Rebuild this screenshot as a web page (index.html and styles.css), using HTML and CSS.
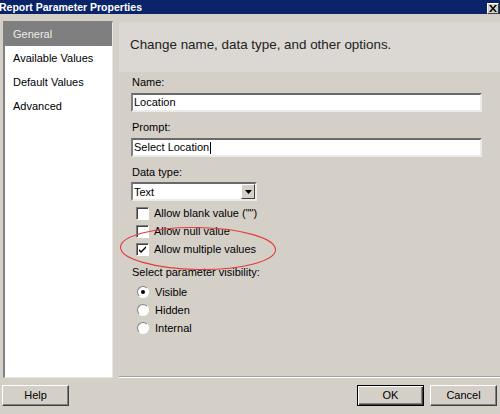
FILE: index.html
```html
<!DOCTYPE html>
<html>
<head>
<meta charset="utf-8">
<link rel="stylesheet" href="styles.css">
</head>
<body>
<div class="window">
  <div class="titlebar">
    <span class="title">Report Parameter Properties</span>
    <span class="close"><svg width="8" height="7" viewBox="0 0 8 7"><path d="M0 0h2l2 2.5L6 0h2L5 3.5 8 7H6L4 4.5 2 7H0l3-3.5z" fill="#000"/></svg></span>
  </div>
  <div class="main">
    <div class="nav">
      <div class="nav-item selected">General</div>
      <div class="nav-item">Available Values</div>
      <div class="nav-item">Default Values</div>
      <div class="nav-item">Advanced</div>
    </div>
    <div class="content">
      <div class="header">Change name, data type, and other options.</div>
      <div class="form">
        <div class="label">Name:</div>
        <div class="textbox">Location</div>
        <div class="label gap">Prompt:</div>
        <div class="textbox">Select Location<span class="caret"></span></div>
        <div class="label gap">Data type:</div>
        <div class="select"><span class="select-text">Text</span><span class="drop"><svg width="7" height="4" viewBox="0 0 7 4"><path d="M0 0h7L3.5 4z" fill="#000"/></svg></span></div>
        <div class="checks">
          <div class="row"><span class="cb"></span>Allow blank value ("")</div>
          <div class="row"><span class="cb"></span>Allow null value</div>
          <div class="row"><span class="cb"><svg width="9" height="9" viewBox="0 0 9 9"><path d="M1 4l2 2 5-5v2L3 8 1 6z" fill="#000"/></svg></span>Allow multiple values</div>
        </div>
        <div class="label vis">Select parameter visibility:</div>
        <div class="radios">
          <div class="row"><span class="rb on"></span>Visible</div>
          <div class="row"><span class="rb"></span>Hidden</div>
          <div class="row"><span class="rb"></span>Internal</div>
        </div>
      </div>
      <div class="sep"></div>
    </div>
  </div>
  <div class="footer">
    <div class="btn">Help</div>
    <div class="spacer"></div>
    <div class="btn default">OK</div>
    <div class="btn">Cancel</div>
  </div>
  <svg class="annot" width="170" height="50" viewBox="0 0 170 50"><ellipse cx="85" cy="24.5" rx="77.5" ry="21" fill="none" stroke="#e23b3b" stroke-width="1.1" transform="rotate(1 85 24.5)"/></svg>
</div>
</body>
</html>
```
FILE: styles.css
```css
html, body {
  margin: 0;
  padding: 0;
}
body {
  width: 500px;
  height: 414px;
  overflow: hidden;
  background: #d4d0c8;
  font-family: "Liberation Sans", Arial, sans-serif;
  font-size: 11px;
  color: #000;
}
.window {
  position: relative;
  width: 500px;
  height: 414px;
  display: flex;
  flex-direction: column;
}
.titlebar {
  height: 14px;
  background: #0a246a;
  display: flex;
  align-items: center;
  justify-content: space-between;
}
.title {
  color: #fff;
  font-weight: bold;
  font-size: 10.5px;
  margin-left: -1px;
  line-height: 14px;
}
.close {
  width: 12px;
  height: 11px;
  margin-top: 3px;
  margin-right: 1px;
  background: #d4d0c8;
  box-sizing: border-box;
  border-top: 1px solid #fff;
  border-left: 1px solid #fff;
  border-right: 1px solid #404040;
  border-bottom: 1px solid #404040;
  display: flex;
  align-items: center;
  justify-content: center;
}
.main {
  display: flex;
  height: 364px;
}
.nav {
  margin-top: 7px;
  margin-left: 3px;
  width: 110px;
  height: 357px;
  box-sizing: border-box;
  background: #fff;
  border-top: 2px solid #808080;
  border-left: 2px solid #808080;
  border-right: 1px solid #e8e6e2;
  border-bottom: 1px solid #e8e6e2;
}
.nav-item {
  height: 24px;
  line-height: 24px;
  padding-left: 8px;
}
.nav-item.selected {
  background: #7f7f7f;
  color: #ececec;
  height: 23px;
  line-height: 23px;
}
.content {
  margin-left: 6px;
  flex: 1;
  display: flex;
  flex-direction: column;
}
.header {
  margin-top: 8px;
  height: 50px;
  line-height: 46px;
  padding-left: 11px;
  font-size: 13.4px;
  color: #222;
  background: #dbd8d3;
}
.form {
  padding-left: 12px;
}
.label {
  margin-top: 4px;
  height: 13px;
  line-height: 13px;
  padding-left: 1px;
}
.label.gap {
  margin-top: 9px;
}
.label.vis {
  margin-top: 8px;
}
.textbox {
  margin-top: 4px;
  width: 351px;
  height: 19px;
  box-sizing: border-box;
  background: #fff;
  border-top: 2px solid #6a6a6a;
  border-left: 2px solid #808080;
  border-right: 2px solid #ecebe8;
  border-bottom: 2px solid #ecebe8;
  line-height: 15px;
  padding-left: 1px;
  display: flex;
  align-items: center;
}
.caret {
  display: inline-block;
  width: 1px;
  height: 12px;
  background: #000;
  margin-left: 1px;
}
.select {
  margin-top: 3px;
  width: 126px;
  height: 19px;
  box-sizing: border-box;
  background: #fff;
  border-top: 2px solid #6a6a6a;
  border-left: 2px solid #808080;
  border-right: 2px solid #ecebe8;
  border-bottom: 2px solid #ecebe8;
  display: flex;
  align-items: center;
  justify-content: space-between;
}
.select-text {
  padding-left: 1px;
}
.drop {
  width: 14px;
  height: 15px;
  box-sizing: border-box;
  background: #d4d0c8;
  border-top: 1px solid #fff;
  border-left: 1px solid #fff;
  border-right: 1px solid #404040;
  border-bottom: 1px solid #404040;
  display: flex;
  align-items: center;
  justify-content: center;
}
.checks {
  margin-top: 3px;
}
.row {
  height: 18px;
  display: flex;
  align-items: center;
  padding-left: 5px;
}
.cb {
  width: 13px;
  height: 13px;
  box-sizing: border-box;
  background: #fff;
  border-top: 1px solid #808080;
  border-left: 1px solid #808080;
  border-right: 1px solid #fff;
  border-bottom: 1px solid #fff;
  box-shadow: inset 1px 1px 0 #404040;
  margin-right: 5px;
  display: flex;
  align-items: center;
  justify-content: center;
}
.radios {
  margin-top: 4px;
}
.radios .row {
  padding-left: 6px;
}
.rb {
  width: 12px;
  height: 12px;
  box-sizing: border-box;
  border-radius: 50%;
  background: #fff;
  border-top: 1px solid #808080;
  border-left: 1px solid #808080;
  border-right: 1px solid #fff;
  border-bottom: 1px solid #fff;
  margin-right: 6px;
  position: relative;
}
.rb.on::after {
  content: "";
  position: absolute;
  left: 3px;
  top: 3px;
  width: 4px;
  height: 4px;
  border-radius: 50%;
  background: #000;
}
.sep {
  margin-top: auto;
  height: 0;
  border-top: 1px solid #a0a0a0;
  border-bottom: 1px solid #fff;
  margin-bottom: 0;
}
.footer {
  display: flex;
  padding: 7px 3px 0 2px;
  gap: 6px;
}
.spacer {
  flex: 1;
}
.btn {
  width: 67px;
  height: 21px;
  box-sizing: border-box;
  background: #d4d0c8;
  border-top: 1px solid #fff;
  border-left: 1px solid #fff;
  border-right: 1px solid #404040;
  border-bottom: 1px solid #404040;
  box-shadow: inset -1px -1px 0 #808080;
  text-align: center;
  line-height: 19px;
}
.btn.default {
  border: 1px solid #000;
  box-shadow: inset 1px 1px 0 #fff, inset -1px -1px 0 #404040, inset -2px -2px 0 #808080;
}
.annot {
  position: absolute;
  left: 113px;
  top: 224px;
}
```
